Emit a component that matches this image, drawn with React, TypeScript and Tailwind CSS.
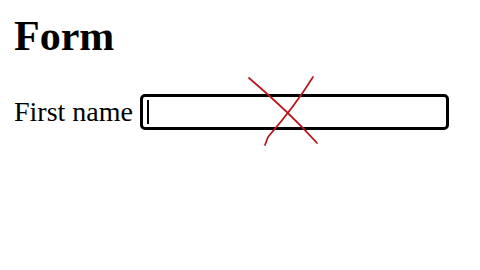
export default function App() {
  return (
    <div className="relative w-[480px] h-[270px] bg-white text-black font-['Liberation_Serif',serif] pl-[14px] pt-[15px]">
      <h1 className="text-[42px] font-bold leading-none">Form</h1>

      <div className="flex items-center mt-[37px]">
        <label className="text-[28px] leading-none">First name</label>
        <div className="ml-[7px] w-[309px] h-[36px] border-[3px] border-black rounded-[5px] flex items-center pl-[4px]">
          <span className="w-[2px] h-[24px] bg-black" />
        </div>
      </div>

      {/* hand-drawn red cross over the field */}
      <svg className="absolute left-0 top-0 pointer-events-none" width="480" height="270" viewBox="0 0 480 270">
        <path d="M249 78 Q 289 112 317 143" stroke="#b8141c" strokeWidth="1.7" fill="none" strokeLinecap="round" />
        <path d="M313 77 Q 295 106 268 137 L 265 145" stroke="#b8141c" strokeWidth="1.7" fill="none" strokeLinecap="round" />
      </svg>
    </div>
  );
}
